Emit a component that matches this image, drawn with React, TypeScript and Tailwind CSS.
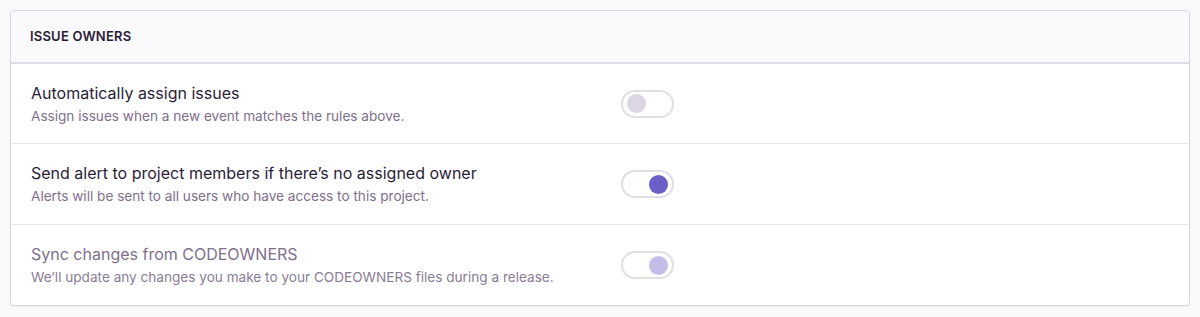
import React from "react";

function Toggle({ on, disabled }: { on: boolean; disabled?: boolean }) {
  const knob = on ? (disabled ? "bg-[#c4bde8]" : "bg-[#6c5fc7]") : "bg-[#dcd6e1]";
  return (
    <div
      className={`flex h-[28px] w-[53px] items-center rounded-full border-2 border-[#e2dee6] bg-white px-[4px] ${
        on ? "justify-end" : "justify-start"
      }`}
    >
      <div className={`h-[19px] w-[19px] rounded-full ${knob}`} />
    </div>
  );
}

function Row({
  title,
  desc,
  on,
  disabled,
  last,
  h,
}: {
  title: string;
  desc: string;
  on: boolean;
  disabled?: boolean;
  last?: boolean;
  h: string;
}) {
  return (
    <div className={`flex ${h} items-center ${last ? "" : "border-b border-[#e7e3eb]"}`}>
      <div className="flex w-1/2 flex-col justify-center pl-[20px] pr-[20px]">
        <div
          className={`text-[16px] leading-[20px] ${disabled ? "text-[#7e6f8d]" : "text-[#2b1d38]"}`}
        >
          {title}
        </div>
        <div
          className={`mt-[4px] text-[13.6px] leading-[18px] ${
            disabled ? "text-[#8a7c98]" : "text-[#7e6f8d]"
          }`}
        >
          {desc}
        </div>
      </div>
      <div className="flex w-1/2 items-center pl-[21px]">
        <Toggle on={on} disabled={disabled} />
      </div>
    </div>
  );
}

export default function App() {
  return (
    <div
      className="h-[317px] w-[1200px] bg-[#fafafb] px-[10px] pt-[10px]"
      style={{ fontFamily: "Inter, 'Noto Sans', sans-serif" }}
    >
      <div className="overflow-hidden rounded-[4px] border border-[#dcd7e1] bg-white shadow-[0_1px_2px_rgba(0,0,0,0.06)]">
        <div className="flex h-[53px] items-center border-b-2 border-[#e0dce5] bg-[#faf9fb] pl-[19px]">
          <span className="text-[13px] font-semibold uppercase tracking-[0.2px] text-[#2b1d38]">
            Issue Owners
          </span>
        </div>
        <Row
          h="h-[80px]"
          title="Automatically assign issues"
          desc="Assign issues when a new event matches the rules above."
          on={false}
        />
        <Row
          h="h-[81px]"
          title="Send alert to project members if there’s no assigned owner"
          desc="Alerts will be sent to all users who have access to this project."
          on={true}
        />
        <Row
          h="h-[80px]"
          title="Sync changes from CODEOWNERS"
          desc="We’ll update any changes you make to your CODEOWNERS files during a release."
          on={true}
          disabled
          last
        />
      </div>
    </div>
  );
}
